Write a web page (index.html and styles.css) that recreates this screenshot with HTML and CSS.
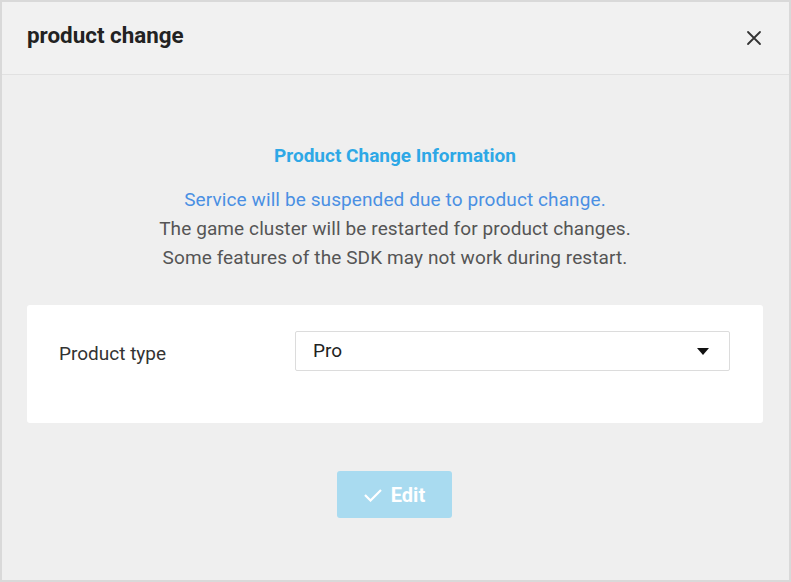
FILE: index.html
```html
<!DOCTYPE html>
<html>
<head>
<meta charset="utf-8">
<link rel="stylesheet" href="styles.css">
</head>
<body>
<div class="dialog">
  <div class="header">
    <h1 class="title">product change</h1>
    <button class="close" aria-label="close">
      <svg width="16" height="16" viewBox="0 0 16 16"><path d="M2 2 L14 14 M14 2 L2 14" stroke="#333" stroke-width="1.8" stroke-linecap="round"/></svg>
    </button>
  </div>
  <div class="content">
    <div class="info">
      <div class="info-title">Product Change Information</div>
      <div class="info-lines">
        <p class="line warn">Service will be suspended due to product change.</p>
        <p class="line">The game cluster will be restarted for product changes.</p>
        <p class="line">Some features of the SDK may not work during restart.</p>
      </div>
    </div>
    <div class="card">
      <div class="row">
        <label class="label">Product type</label>
        <div class="select">
          <span>Pro</span>
          <svg width="12" height="7" viewBox="0 0 12 7"><path d="M0 0 H12 L6 7 Z" fill="#111"/></svg>
        </div>
      </div>
    </div>
    <div class="actions">
      <button class="edit">
        <svg width="18" height="14" viewBox="0 0 18 14"><path d="M1 7 L6.5 12.5 L17 2" stroke="#fff" stroke-width="2.2" fill="none"/></svg>
        <span>Edit</span>
      </button>
    </div>
  </div>
</div>
</body>
</html>
```

FILE: styles.css
```css
* { box-sizing: border-box; }
html, body { margin: 0; padding: 0; }
body {
  width: 791px;
  height: 582px;
  font-family: Roboto, "Liberation Sans", sans-serif;
  background: #ffffff;
}
.dialog {
  width: 791px;
  height: 582px;
  border: 2px solid #d9d9d9;
  background: #efefef;
  display: flex;
  flex-direction: column;
}
.header {
  height: 73px;
  background: #f1f1f1;
  border-bottom: 1px solid #e1e1e1;
  display: flex;
  align-items: center;
  justify-content: space-between;
  padding: 0 27px 0 25px;
  flex-shrink: 0;
}
.title {
  margin: 0;
  font-size: 22.4px;
  font-weight: 700;
  color: #222;
  position: relative;
  top: -3px;
}
.close {
  border: 0;
  background: transparent;
  padding: 0;
  width: 16px;
  height: 16px;
  display: flex;
  cursor: pointer;
}
.content {
  flex: 1;
  display: flex;
  flex-direction: column;
  padding: 66px 26px 0 25px;
}
.info {
  text-align: center;
}
.info-title {
  font-size: 19px;
  font-weight: 700;
  color: #2ea8e6;
  line-height: 29px;
}
.info-lines {
  margin-top: 15px;
}
.line {
  margin: 0;
  font-size: 19px;
  letter-spacing: 0.1px;
  line-height: 29px;
  color: #555555;
}
.line.warn {
  color: #4a8fe3;
}
.card {
  margin-top: 33px;
  background: #ffffff;
  border-radius: 3px;
  padding: 26px 33px 52px 32px;
}
.row {
  display: flex;
  align-items: center;
}
.label {
  width: 236px;
  font-size: 19px;
  color: #333;
  position: relative;
  top: 2px;
}
.select {
  flex: 1;
  height: 40px;
  border: 1px solid #dcdcdc;
  border-radius: 2px;
  display: flex;
  align-items: center;
  justify-content: space-between;
  padding: 0 20px 0 17px;
  font-size: 19px;
  color: #222;
}
.select span { position: relative; top: -1px; }
.actions {
  display: flex;
  justify-content: center;
  margin-top: 48px;
  padding-right: 1px;
}
.edit {
  width: 115px;
  height: 47px;
  border: 0;
  border-radius: 3px;
  background: #a9dbf0;
  color: #fff;
  font-family: Roboto, "Liberation Sans", sans-serif;
  font-size: 20px;
  font-weight: 700;
  display: flex;
  align-items: center;
  justify-content: center;
  gap: 9px;
  padding: 0;
}
```
